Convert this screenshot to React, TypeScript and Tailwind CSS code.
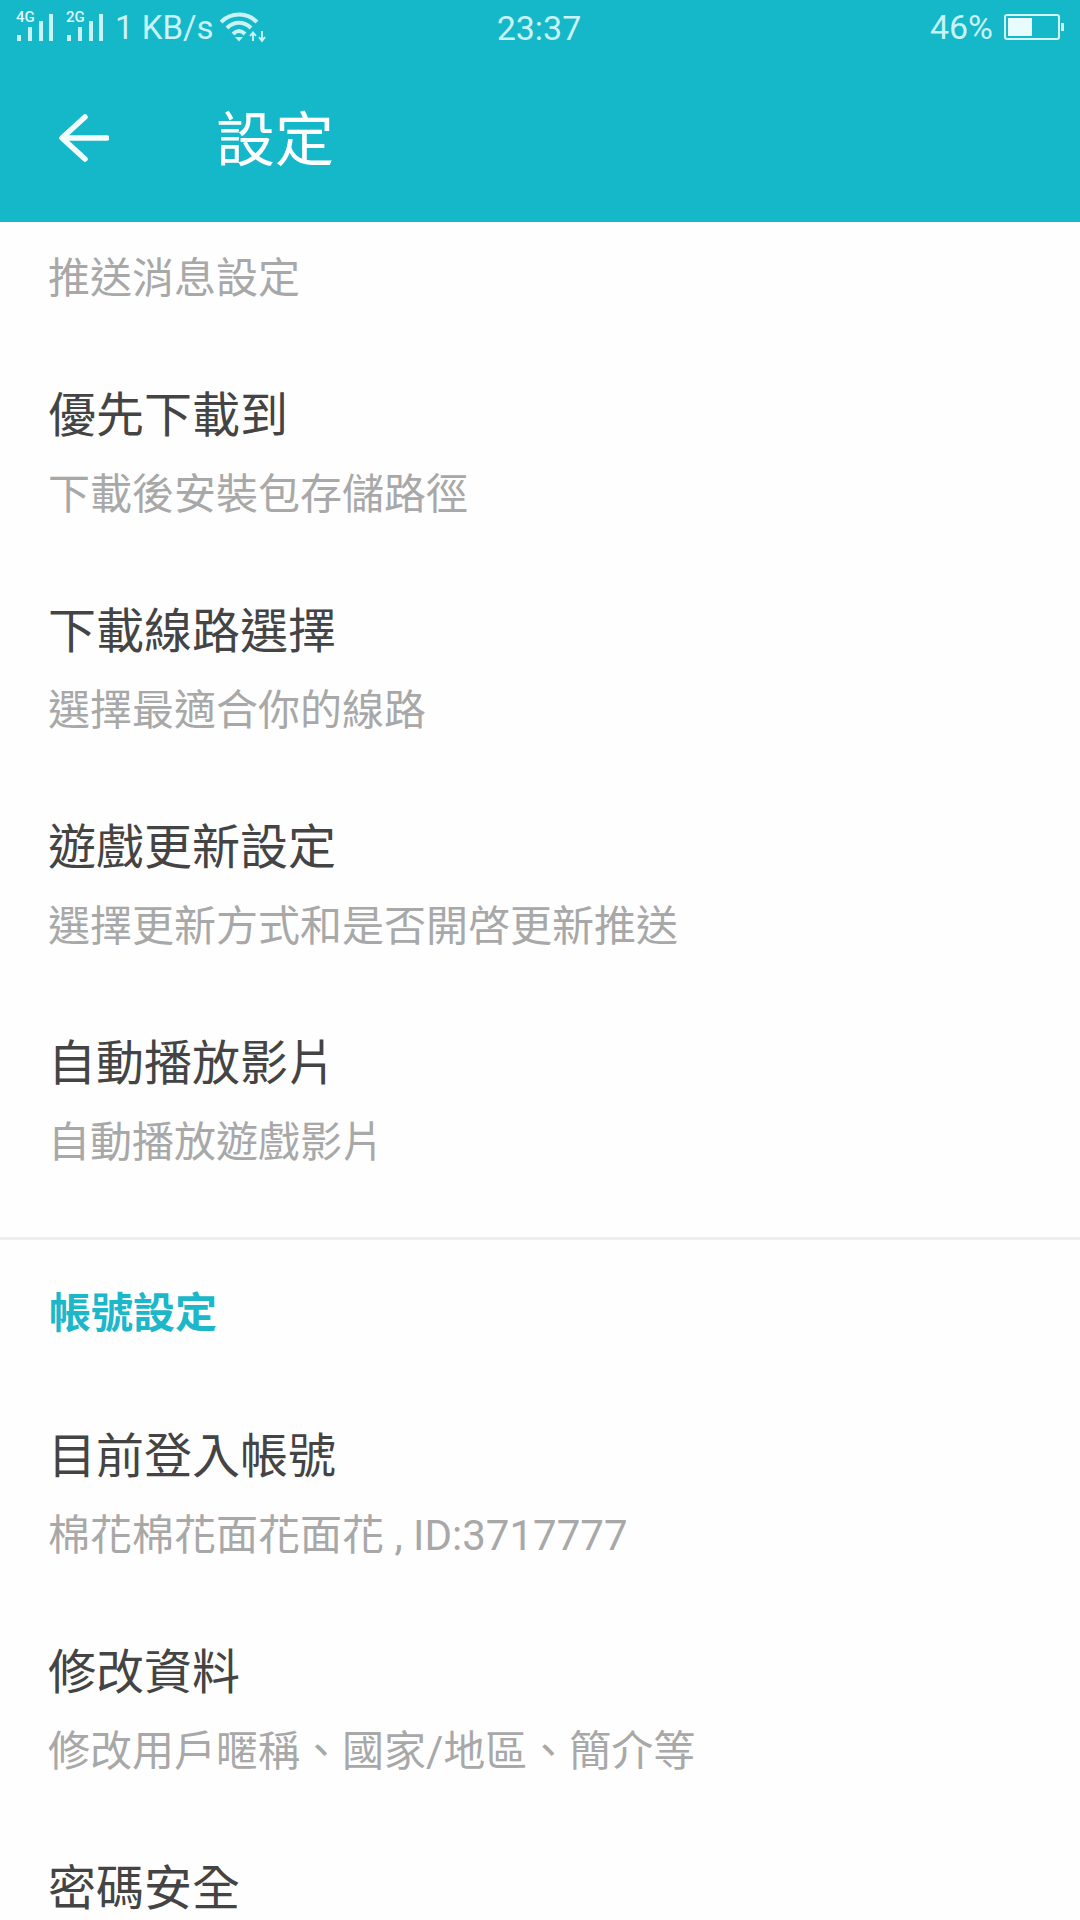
const CJK = { fontFamily: '"Roboto","Noto Sans CJK TC",sans-serif' };

function Signal({ label }: { label: string }) {
  return (
    <svg width="40" height="40" viewBox="0 0 40 40" className="block">
      <text x="0" y="15" fontSize="15" fontWeight="500" fill="#dff8fb" fontFamily="Roboto, sans-serif">{label}</text>
      <rect x="1" y="28" width="4" height="6" fill="#c9f3f7" />
      <rect x="12" y="20" width="4" height="14" fill="#c9f3f7" />
      <rect x="23" y="14" width="4" height="20" fill="#c9f3f7" />
      <rect x="33" y="7" width="4" height="27" fill="#c9f3f7" />
    </svg>
  );
}

function Wifi() {
  return (
    <svg width="46" height="32" viewBox="0 0 46 32" fill="none" className="block">
      <path d="M1 11 C11 1 27 1 37 11" stroke="#c9f3f7" strokeWidth="4" />
      <path d="M7 17 C14 10 24 10 31 17" stroke="#c9f3f7" strokeWidth="4" />
      <path d="M13 23 C17 19 21 19 25 23" stroke="#c9f3f7" strokeWidth="4" />
      <path d="M15 26 L23 26 L19 30.5 Z" fill="#c9f3f7" />
      <path d="M33 30 V22 M30 25 L33 21.5 L36 25 M42 20 V29 M39 26 L42 30 L45 26" stroke="#c9f3f7" strokeWidth="1.9" />
    </svg>
  );
}

function Battery() {
  return (
    <div className="flex items-center">
      <div className="w-[56px] h-[26px] rounded-[3px] border-2 border-[#d4f5f8] p-[2px]">
        <div className="w-[24px] h-full bg-[#e8fbfd]" />
      </div>
      <div className="w-[3px] h-[8px] ml-[1px] bg-[#d4f5f8]" />
    </div>
  );
}

function Row({ title, sub }: { title: string; sub: string }) {
  return (
    <div className="px-[48px] pt-[39px] pb-[37px]">
      <div className="text-[48px] leading-[64px] text-[#444444] whitespace-nowrap">{title}</div>
      <div className="mt-[18px] text-[42px] leading-[58px] text-[#a8a8a8] whitespace-nowrap">{sub}</div>
    </div>
  );
}

export default function App() {
  return (
    <div className="w-[1080px] h-[1920px] overflow-hidden bg-[#fefefe]" style={CJK}>
      <div className="bg-[#14b8c8] h-[222px]">
        <div className="h-[54px] grid grid-cols-3 items-center pl-[16px] pr-[16px] text-[#c9f3f7]">
          <div className="flex items-center">
            <Signal label="4G" />
            <div className="ml-[10px]"><Signal label="2G" /></div>
            <span className="ml-[9px] text-[33px] leading-none whitespace-nowrap">1 KB/s</span>
            <div className="ml-[6px]"><Wifi /></div>
          </div>
          <div className="text-center text-[34px] leading-none pt-[2px] pr-[2px]">23:37</div>
          <div className="flex items-center justify-end">
            <span className="text-[34px] leading-none mr-[11px]">46%</span>
            <Battery />
          </div>
        </div>
        <div className="h-[168px] flex items-center">
          <svg width="50" height="48" viewBox="0 0 50 48" fill="none" className="ml-[59px] block">
            <path d="M48 24 H4 M26 3 L3 24 L26 45" stroke="#f4fdfe" strokeWidth="5.5" strokeLinecap="round" strokeLinejoin="round" />
          </svg>
          <div className="ml-[107px] text-[59px] leading-none text-white pt-[4px]">設定</div>
        </div>
      </div>

      <div className="px-[48px] pt-[28px] pb-[37px] text-[42px] leading-[58px] text-[#a8a8a8]">推送消息設定</div>
      <Row title="優先下載到" sub="下載後安裝包存儲路徑" />
      <Row title="下載線路選擇" sub="選擇最適合你的線路" />
      <Row title="遊戲更新設定" sub="選擇更新方式和是否開啓更新推送" />
      <Row title="自動播放影片" sub="自動播放遊戲影片" />

      <div className="mt-[28px] h-[3px] bg-[#eeeeee]" />
      <div className="px-[49px] pt-[45px] pb-[43px] text-[42px] leading-[58px] font-bold text-[#1cb7c9]">帳號設定</div>
      <Row title="目前登入帳號" sub="棉花棉花面花面花 , ID:3717777" />
      <Row title="修改資料" sub="修改用戶暱稱、國家/地區、簡介等" />
      <Row title="密碼安全" sub="" />
    </div>
  );
}
